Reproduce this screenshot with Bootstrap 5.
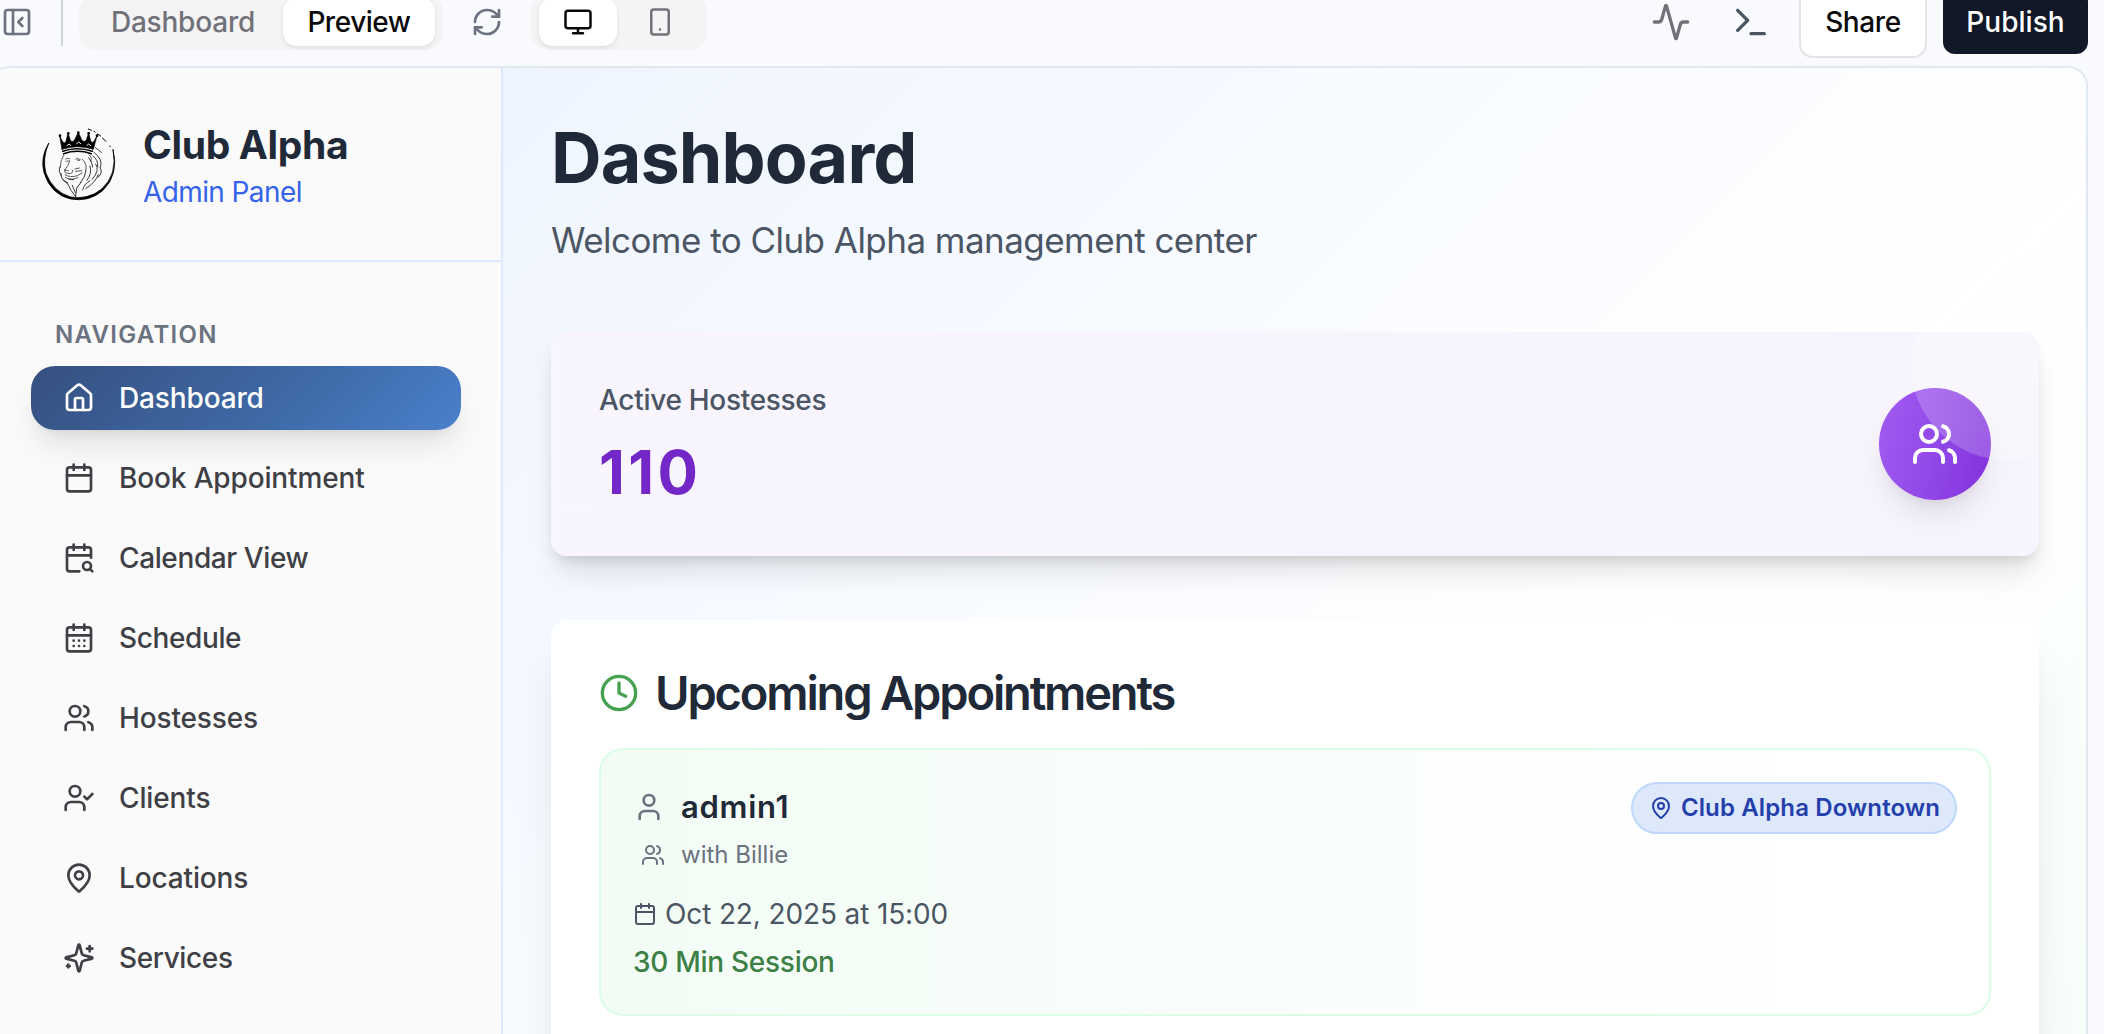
<!DOCTYPE html>
<html lang="en">
<head>
<meta charset="utf-8">
<meta name="viewport" content="width=device-width, initial-scale=1">
<title>Club Alpha Admin Panel</title>
<link rel="stylesheet" href="https://cdn.jsdelivr.net/npm/bootstrap@5.3.0/dist/css/bootstrap.min.css">
<style>
body{font-family:Inter,"Liberation Sans",sans-serif;font-size:28px;line-height:40px;background:#f9fafd;height:100vh;color:#1f2937}
.ico{fill:none;stroke:currentColor;stroke-width:2;stroke-linecap:round;stroke-linejoin:round;flex:none;width:32px;height:32px}
.ico-20{width:24px;height:24px}.ico-30{width:30px;height:30px}.ico-40{width:40px;height:40px}.ico-48{width:48px;height:48px}
.ink-soft{color:#6b7280}.ink-mid{color:#4b5563}.ink-zinc{color:#71717a}
.fw-mid{font-weight:500}

.topbar{height:44px;margin-bottom:22px;padding:0 16px 0 1px;white-space:nowrap}
.divider{width:2px;height:48px;background:#cfd4de;margin:0 16px 0 28px}
.seg{height:56px;background:#f4f4f5;border-radius:18px;padding:4px 8px;gap:4px}
.seg-item{height:48px;border-radius:14px;color:#71717a;font-weight:500;letter-spacing:-.2px}
.seg-item.active{background:#fff;color:#0a0a0a;box-shadow:0 2px 5px rgba(0,0,0,.09)}
.w-dash{width:192px}.w-prev{width:152px;letter-spacing:-.47px}.w-dev{width:78px}
.reload{margin:0 28px}
.term{margin:0 28px 0 40px}
.top-btn{--bs-btn-font-size:28px;--bs-btn-font-weight:500;--bs-btn-line-height:40px;--bs-btn-border-radius:14px;--bs-btn-padding-x:0;--bs-btn-padding-y:0;display:flex;align-items:center;justify-content:center}
.btn-share{width:128px;height:72px;background:#fff;border:2px solid #e4e4e7;color:#0a0a0a;letter-spacing:-.38px}
.btn-publish{width:145px;height:64px;background:#111827;color:#fff;border:0;letter-spacing:.05px;border-radius:12px}

.shell{margin-left:-10px;width:2098px;height:968px;border:2px solid #e2e8f0;border-bottom:0;border-radius:20px 20px 0 0}
.side{width:511px;flex:none;background:#fafafa;border-right:2px solid #dbeafe}
.brand{padding:48px 47px;gap:24px;border-bottom:2px solid #dbeafe}
.brand svg{width:80px;height:80px;flex:none}
.brand-name{font-size:39px;font-weight:700;line-height:57px;margin-bottom:-1px;letter-spacing:-.34px}
.brand-sub{color:#3563e9;letter-spacing:-.6px}
.menu{padding:40px 40px 0 39px}
.menu-label{height:64px;padding:2px 0 0 24px;font-size:24px;font-weight:600;letter-spacing:1.3px;color:#6b7280}
.menu .nav{gap:16px;width:430px}
.menu .nav-link{height:64px;padding:0 32px;gap:24px;border-radius:24px;color:#3f3f46;font-weight:500;letter-spacing:-.14px}
.menu .nav-link.active{color:#fff;background:linear-gradient(135deg,#36507f 0%,#3f6aa8 60%,#4a80cb 100%);box-shadow:0 20px 30px -6px rgba(0,0,0,.1),0 8px 12px -8px rgba(0,0,0,.1)}
.menu .nav-link.tight{letter-spacing:-.38px}

.content{padding:48px 47px 0 48px;background:linear-gradient(135deg,#eff5ff 0%,#fff 50%,#f0fdf4 100%) 0 0/100% 1800px}
.page-title{font-size:70px;font-weight:700;line-height:83px;letter-spacing:-.85px;margin:0 0 13px}
.page-sub{font-size:35px;line-height:56px;letter-spacing:-.54px;margin:0 0 64px}
.stat{height:224px;padding:48px;border:0;border-radius:16px;background:linear-gradient(90deg,#f8f5ff,#f8f4fe);box-shadow:0 20px 30px -6px rgba(0,0,0,.12),0 8px 12px -4px rgba(0,0,0,.1);margin-bottom:64px}
.stat::after{content:"";position:absolute;right:-64px;top:-64px;width:192px;height:192px;border-radius:50%;background:rgba(255,255,255,.2)}
.stat-label{letter-spacing:-.3px;margin-bottom:16px}
.stat-num{font-size:60px;line-height:73px;font-weight:700;letter-spacing:3.4px;color:#7427c7}
.stat-icon{width:112px;height:112px;background:linear-gradient(105deg,#a05af0 5%,#9249e8 50%,#8333de 95%);box-shadow:0 20px 30px -6px rgba(0,0,0,.1),0 8px 12px -8px rgba(0,0,0,.1)}
.panel-card{height:560px;padding:48px;border:0;border-radius:16px;background:rgba(255,255,255,.9);box-shadow:0 40px 50px -10px rgba(0,0,0,.1),0 16px 20px -12px rgba(0,0,0,.1)}
.panel-title{font-size:47px;line-height:50px;font-weight:600;letter-spacing:-2.16px}
.clock{color:#48a151}
.appt{height:268px;margin-top:30px;padding:32px;border:2px solid #dcfce7;border-radius:24px;background:linear-gradient(90deg,#f2fcf5,#fff 85%)}
.who{font-size:31px;font-weight:600;height:48px;padding-top:1px;letter-spacing:.7px}
.with{font-size:24px;height:49px;margin:0 0 15px 8px}
.when{margin-bottom:8px;letter-spacing:-.13px}
.session{color:#3d8045;font-weight:500;letter-spacing:-.28px}
.place{height:52px;padding:0 15px 0 16px;border:2px solid #bfd7fb;background:#dde8fb;color:#243fac;font-size:24px;font-weight:600;letter-spacing:.13px}
</style>
</head>
<body class="overflow-hidden">
<svg class="d-none" xmlns="http://www.w3.org/2000/svg">
  <symbol id="i-panel" viewBox="0 0 24 24"><rect width="18" height="18" x="3" y="3" rx="2"/><path d="M9 3v18M16 15l-3-3 3-3"/></symbol>
  <symbol id="i-refresh" viewBox="0 0 24 24"><path d="M3 12a9 9 0 0 1 9-9 9.75 9.75 0 0 1 6.74 2.74L21 8"/><path d="M21 3v5h-5M21 12a9 9 0 0 1-9 9 9.75 9.75 0 0 1-6.74-2.74L3 16"/><path d="M8 16H3v5"/></symbol>
  <symbol id="i-monitor" viewBox="0 0 24 24"><rect width="20" height="14" x="2" y="3" rx="2"/><path d="M8 21h8M12 17v4"/></symbol>
  <symbol id="i-phone" viewBox="0 0 24 24"><rect width="14" height="20" x="5" y="2" rx="2"/><path d="M12 18h.01"/></symbol>
  <symbol id="i-activity" viewBox="0 0 24 24"><path d="M22 12h-2.48a2 2 0 0 0-1.93 1.46l-2.35 8.36a.25.25 0 0 1-.48 0L9.24 2.18a.25.25 0 0 0-.48 0l-2.35 8.36A2 2 0 0 1 4.49 12H2"/></symbol>
  <symbol id="i-terminal" viewBox="0 0 24 24"><path d="m4 17 6-6-6-6M12 19h8"/></symbol>
  <symbol id="i-home" viewBox="0 0 24 24"><path d="M15 21v-8a1 1 0 0 0-1-1h-4a1 1 0 0 0-1 1v8"/><path d="M3 10a2 2 0 0 1 .709-1.528l7-6a2 2 0 0 1 2.582 0l7 6A2 2 0 0 1 21 10v9a2 2 0 0 1-2 2H5a2 2 0 0 1-2-2z"/></symbol>
  <symbol id="i-cal" viewBox="0 0 24 24"><path d="M8 2v4M16 2v4M3 10h18"/><rect width="18" height="18" x="3" y="4" rx="2"/></symbol>
  <symbol id="i-calsearch" viewBox="0 0 24 24"><path d="M16 2v4M8 2v4M3 10h18M21 11.75V6a2 2 0 0 0-2-2H5a2 2 0 0 0-2 2v14a2 2 0 0 0 2 2h7.25M22 22l-1.875-1.875"/><circle cx="18" cy="18" r="3"/></symbol>
  <symbol id="i-caldays" viewBox="0 0 24 24"><path d="M8 2v4M16 2v4M3 10h18M8 14h.01M12 14h.01M16 14h.01M8 18h.01M12 18h.01M16 18h.01"/><rect width="18" height="18" x="3" y="4" rx="2"/></symbol>
  <symbol id="i-users" viewBox="0 0 24 24"><path d="M16 21v-2a4 4 0 0 0-4-4H6a4 4 0 0 0-4 4v2"/><circle cx="9" cy="7" r="4"/><path d="M22 21v-2a4 4 0 0 0-3-3.87M16 3.13a4 4 0 0 1 0 7.75"/></symbol>
  <symbol id="i-usercheck" viewBox="0 0 24 24"><path d="m16 11 2 2 4-4M16 21v-2a4 4 0 0 0-4-4H6a4 4 0 0 0-4 4v2"/><circle cx="9" cy="7" r="4"/></symbol>
  <symbol id="i-user" viewBox="0 0 24 24"><path d="M19 21v-2a4 4 0 0 0-4-4H9a4 4 0 0 0-4 4v2"/><circle cx="12" cy="7" r="4"/></symbol>
  <symbol id="i-pin" viewBox="0 0 24 24"><path d="M20 10c0 4.993-5.539 10.193-7.399 11.799a1 1 0 0 1-1.202 0C9.539 20.193 4 14.993 4 10a8 8 0 0 1 16 0"/><circle cx="12" cy="10" r="3"/></symbol>
  <symbol id="i-sparkles" viewBox="0 0 24 24"><path d="M9.937 15.5A2 2 0 0 0 8.5 14.063l-6.135-1.582a.5.5 0 0 1 0-.962L8.5 9.936A2 2 0 0 0 9.937 8.5l1.582-6.135a.5.5 0 0 1 .963 0L14.063 8.5A2 2 0 0 0 15.5 9.937l6.135 1.581a.5.5 0 0 1 0 .964L15.5 14.063a2 2 0 0 0-1.437 1.437l-1.582 6.135a.5.5 0 0 1-.963 0z"/><path d="M20 3v4M22 5h-4M4 17v2M5 18H3"/></symbol>
  <symbol id="i-clock" viewBox="0 0 24 24"><circle cx="12" cy="12" r="10"/><path d="M12 6v6l4 2"/></symbol>
</svg>

<header class="topbar d-flex align-items-center">
  <svg class="ico ink-soft"><use href="#i-panel"/></svg>
  <div class="divider"></div>
  <div class="seg d-flex align-items-center">
    <div class="seg-item w-dash d-flex align-items-center justify-content-center">Dashboard</div>
    <div class="seg-item active w-prev d-flex align-items-center justify-content-center">Preview</div>
  </div>
  <svg class="ico ink-soft reload"><use href="#i-refresh"/></svg>
  <div class="seg d-flex align-items-center">
    <div class="seg-item active w-dev d-flex align-items-center justify-content-center"><svg class="ico ico-30"><use href="#i-monitor"/></svg></div>
    <div class="seg-item w-dev d-flex align-items-center justify-content-center"><svg class="ico ico-30"><use href="#i-phone"/></svg></div>
  </div>
  <div class="d-flex align-items-center ms-auto">
    <svg class="ico ico-40 ink-zinc"><use href="#i-activity"/></svg>
    <svg class="ico ico-40 ink-mid term"><use href="#i-terminal"/></svg>
    <button class="btn top-btn btn-share me-3">Share</button>
    <button class="btn top-btn btn-publish">Publish</button>
  </div>
</header>

<div class="shell d-flex overflow-hidden">
  <aside class="side">
    <div class="brand d-flex align-items-center">
      <svg viewBox="27 12 240 240" fill="none" stroke="#000" stroke-linecap="round" stroke-linejoin="round">
        <path d="M56 70Q30 112 42 158Q62 223 122 237Q176 247 218 212Q268 164 249 88Q264 164 214 208Q174 240 122 231Q70 216 48 160Q36 116 56 70Z" fill="#000" stroke-width="2.4"/>
        <path d="M175 27l9 4M192 34l3 2M203 42l9 6M217 54l11 10M240 78l1 2" stroke-width="3"/>
        <path d="M96 88L89 48L99 67Q105 72 108 64L114 39L121 60Q127 70 134 59L145 37L155 59Q162 69 169 60L176 39L182 63Q187 71 192 64L201 47L190 88Q143 72 96 88Z" fill="#000" stroke-width="2"/>
        <g fill="#000" stroke="none"><circle cx="90" cy="47" r="4"/><circle cx="115" cy="40" r="4"/><circle cx="145" cy="38" r="4"/><circle cx="176" cy="40" r="4"/><circle cx="201" cy="47" r="4"/></g>
        <path d="M111 77l6-5 5 4M140 71l6-5 6 5M171 76l5-4 6 5" stroke="#fafafa" stroke-width="3"/>
        <path d="M98 94Q142 79 187 94M101 101Q142 87 184 101" stroke-width="4.5"/>
        <path d="M102 104Q90 122 91 142M107 117q7-5 12-1M137 117q7-4 12 1M108 124l7-1M119 122q-3 16-13 25q-5 7 1 12l14 2q9-3 6-11M103 150l12 2M105 164q14 10 38 3l14-9M106 172q16 11 38 1M157 118q16 14 10 34M178 104q10 8 5 20" stroke-width="1.9"/>
        <path d="M89 141q-5 13 4 25M93 161q-2 18 17 26M98 178l13 12M111 187l12 24 14 19 3-26 14-18M127 196l9 22M168 153q-3 20-16 34M180 138q7 22-9 43M197 132q14 17-10 46M180 182q-18 10-22 28M205 164q-8 23-38 42M192 97q27 20 20 44M189 108q17 13 14 32M210 142q10 15-5 29M196 83l18 14M176 113q12 14 12 28" stroke-width="2.3"/>
        <path d="M142 120q5 5 9 0M135 147l13-3M137 154l18-2M117 178l14 1" stroke-width="2"/>
      </svg>
      <div>
        <div class="brand-name">Club Alpha</div>
        <div class="brand-sub">Admin Panel</div>
      </div>
    </div>
    <div class="menu">
      <div class="menu-label d-flex align-items-center">NAVIGATION</div>
      <nav class="nav flex-column">
        <a class="nav-link active d-flex align-items-center"><svg class="ico"><use href="#i-home"/></svg>Dashboard</a>
        <a class="nav-link d-flex align-items-center"><svg class="ico"><use href="#i-cal"/></svg>Book Appointment</a>
        <a class="nav-link d-flex align-items-center tight"><svg class="ico"><use href="#i-calsearch"/></svg>Calendar View</a>
        <a class="nav-link d-flex align-items-center tight"><svg class="ico"><use href="#i-caldays"/></svg>Schedule</a>
        <a class="nav-link d-flex align-items-center"><svg class="ico"><use href="#i-users"/></svg>Hostesses</a>
        <a class="nav-link d-flex align-items-center"><svg class="ico"><use href="#i-usercheck"/></svg>Clients</a>
        <a class="nav-link d-flex align-items-center"><svg class="ico"><use href="#i-pin"/></svg>Locations</a>
        <a class="nav-link d-flex align-items-center tight"><svg class="ico"><use href="#i-sparkles"/></svg>Services</a>
      </nav>
    </div>
  </aside>

  <main class="content flex-grow-1">
    <h1 class="page-title">Dashboard</h1>
    <p class="page-sub ink-mid">Welcome to Club Alpha management center</p>

    <section class="card stat flex-row align-items-center justify-content-between overflow-hidden">
      <div>
        <div class="stat-label ink-mid fw-mid">Active Hostesses</div>
        <div class="stat-num">110</div>
      </div>
      <div class="stat-icon rounded-circle d-flex align-items-center justify-content-center text-white">
        <svg class="ico ico-48"><use href="#i-users"/></svg>
      </div>
    </section>

    <section class="card panel-card">
      <h2 class="panel-title d-flex align-items-center gap-3 m-0">
        <svg class="ico ico-40 clock"><use href="#i-clock"/></svg>Upcoming Appointments
      </h2>
      <div class="appt d-flex justify-content-between align-items-start">
        <div>
          <div class="who d-flex align-items-center gap-3"><svg class="ico ink-soft"><use href="#i-user"/></svg>admin1</div>
          <div class="with ink-soft d-flex align-items-center gap-3"><svg class="ico ico-20"><use href="#i-users"/></svg>with Billie</div>
          <div class="when ink-mid d-flex align-items-center gap-2"><svg class="ico ico-20"><use href="#i-cal"/></svg>Oct 22, 2025 at 15:00</div>
          <div class="session">30 Min Session</div>
        </div>
        <span class="place rounded-pill d-inline-flex align-items-center gap-2"><svg class="ico ico-20"><use href="#i-pin"/></svg>Club Alpha Downtown</span>
      </div>
    </section>
  </main>
</div>
<script src="https://cdn.jsdelivr.net/npm/bootstrap@5.3.0/dist/js/bootstrap.bundle.min.js"></script>
</body>
</html>
